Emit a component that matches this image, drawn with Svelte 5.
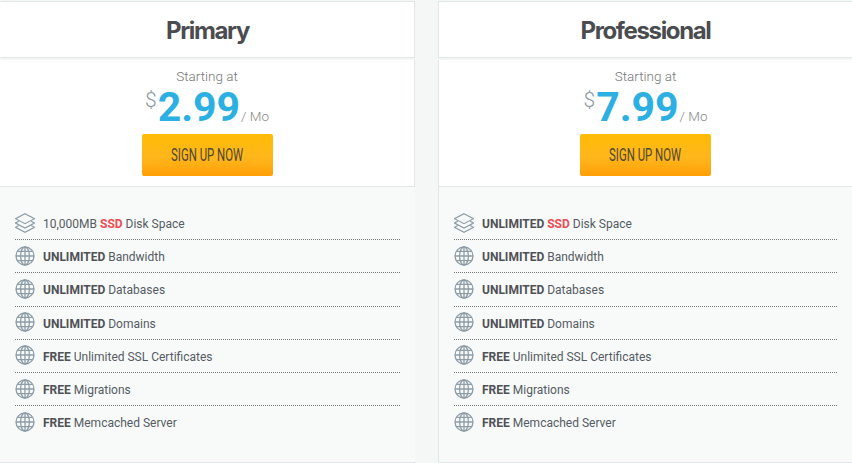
<script lang="ts">
	type Feature = { bold?: string; before?: string; ssd?: boolean; text: string; icon?: "layers" | "globe" };

	const shared: Feature[] = [
		{ bold: "UNLIMITED", text: "Bandwidth" },
		{ bold: "UNLIMITED", text: "Databases" },
		{ bold: "UNLIMITED", text: "Domains" },
		{ bold: "FREE", text: "Unlimited SSL Certificates" },
		{ bold: "FREE", text: "Migrations" },
		{ bold: "FREE", text: "Memcached Server" },
	];

	const plans = [
		{
			name: "Primary",
			price: "2.99",
			features: [{ before: "10,000MB", ssd: true, text: "Disk Space", icon: "layers" }, ...shared] as Feature[],
		},
		{
			name: "Professional",
			price: "7.99",
			features: [{ bold: "UNLIMITED", ssd: true, text: "Disk Space", icon: "layers" }, ...shared] as Feature[],
		},
	];
</script>

<div class="page">
	{#each plans as plan}
		<section class="plan">
			<header class="head"><h2>{plan.name}</h2></header>
			<div class="pricing">
				<div class="starting">Starting at</div>
				<div class="price">
					<span class="cur">$</span><span class="amount">{plan.price}</span><span class="per">/ Mo</span>
				</div>
				<button class="signup"><span>SIGN UP NOW</span></button>
			</div>
			<ul class="features">
				{#each plan.features as f}
					<li>
						{#if f.icon === "layers"}
							<svg class="icon" viewBox="0 0 20 20" fill="none" stroke="#8d9ca6" stroke-width="1.15">
								<path d="M10 .7 L19.5 5.7 L10 10.7 L.5 5.7 Z" />
								<path d="M3.8 8.2 L.5 10 L10 15 L19.5 10 L16.2 8.2" />
								<path d="M3.8 12.5 L.5 14.3 L10 19.3 L19.5 14.3 L16.2 12.5" />
							</svg>
						{:else}
							<svg class="icon" viewBox="0 0 20 20" fill="none" stroke="#8d9ca6" stroke-width="1.3">
								<circle cx="10" cy="10" r="9" />
								<ellipse cx="10" cy="10" rx="4.4" ry="9" />
								<path d="M10 1 V19 M1 10 H19 M2.4 5.4 H17.6 M2.4 14.6 H17.6" />
							</svg>
						{/if}
						<span class="label">
							{#if f.before}{f.before}{" "}{/if}{#if f.bold}<b>{f.bold}</b>{" "}{/if}{#if f.ssd}<b class="ssd">SSD</b>{" "}{/if}{f.text}
						</span>
					</li>
				{/each}
			</ul>
		</section>
	{/each}
</div>

<style>
	:global(body) {
		background: #f5f6f6;
		overflow: hidden;
	}

	.page {
		display: grid;
		grid-template-columns: 415px 415px;
		column-gap: 23px;
		width: 852px;
		height: 463px;
		overflow: hidden;
		font-family: Roboto, "Liberation Sans", sans-serif;
	}

	.plan {
		display: flex;
		flex-direction: column;
		height: 463px;
	}

	.head {
		box-sizing: border-box;
		height: 57px;
		margin-top: 1px;
		background: #fff;
		border: 1px solid #dfe7e7;
		border-left-color: transparent;
		text-align: center;
	}

	.plan:nth-child(2) .head {
		border-left-color: #dfe7e7;
	}

	h2 {
		margin: 0;
		padding-top: 14px;
		font-family: Inter, Roboto, sans-serif;
		font-size: 24px;
		line-height: 30px;
		font-weight: 700;
		color: #4a4c50;
		letter-spacing: -1.35px;
	}

	.pricing {
		box-sizing: border-box;
		height: 127px;
		margin-top: 2px;
		background: #fff;
		border-right: 1px solid #dfe7e7;
		border-bottom: 1px solid #dfe7e7;
		text-align: center;
	}

	.plan:nth-child(2) .pricing {
		border-left: 1px solid #dfe7e7;
	}

	.starting {
		padding-top: 8px;
		font-size: 13.5px;
		line-height: 16px;
		font-weight: 300;
		color: #777;
	}

	.price {
		height: 43px;
		margin-top: 2px;
		line-height: 43px;
		white-space: nowrap;
		display: flex;
		justify-content: center;
		align-items: baseline;
	}

	.cur {
		font-size: 21px;
		font-weight: 300;
		color: #8a979f;
		position: relative;
		top: -14px;
		margin-right: 1px;
	}

	.amount {
		font-size: 41px;
		font-weight: 700;
		color: #2cb0e3;
	}

	.per {
		font-size: 13.5px;
		font-weight: 300;
		color: #888;
		margin-left: 1px;
	}

	.signup {
		display: block;
		width: 131px;
		height: 42px;
		margin: 5px auto 0;
		padding: 0;
		border: 0;
		border-radius: 2px;
		background: linear-gradient(#ffbb05 0%, #ffb71c 55%, #ff9f06 100%);
		color: #4f4630;
		font-family: Roboto, sans-serif;
		font-size: 19px;
		line-height: 40px;
	}

	.signup span {
		display: inline-block;
		white-space: nowrap;
		transform: scaleX(0.6);
	}

	.features {
		flex: 1;
		box-sizing: border-box;
		margin: 0;
		padding: 20px 15px 0;
		list-style: none;
		background: #f8fafa;
		border-bottom: 1px solid #dfe7e7;
	}

	.plan:nth-child(2) .features {
		border-left: 1px solid #dfe7e7;
		padding-right: 16px;
	}

	li {
		display: flex;
		align-items: center;
		gap: 8px;
		height: 33.2px;
		box-sizing: border-box;
		border-bottom: 1px dotted #777;
		font-size: 12px;
		color: #555b62;
	}

	li:last-child {
		height: 32px;
		border-bottom: 0;
	}

	.label {
		padding-top: 2px;
	}

	.icon {
		width: 20px;
		height: 20px;
		flex: none;
		margin-top: -1px;
	}

	b {
		font-weight: 700;
		color: #4f5155;
	}

	b.ssd {
		color: #ef4a4f;
	}
</style>
